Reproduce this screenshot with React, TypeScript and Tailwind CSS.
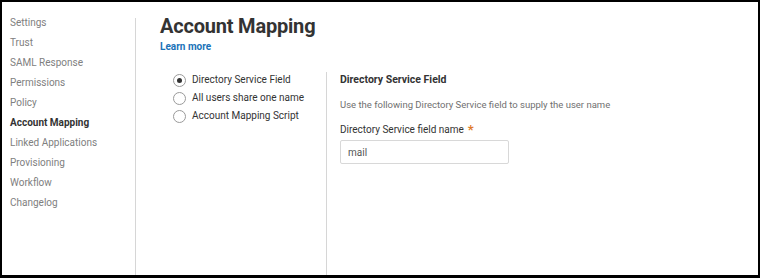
const NAV_ITEMS = [
  'Settings',
  'Trust',
  'SAML Response',
  'Permissions',
  'Policy',
  'Account Mapping',
  'Linked Applications',
  'Provisioning',
  'Workflow',
  'Changelog',
];

const MAPPING_OPTIONS = ['Directory Service Field', 'All users share one name', 'Account Mapping Script'];

function Radio({ checked }: { checked: boolean }) {
  return (
    <span className="w-[13px] h-[13px] rounded-full border border-[#9a9a9a] bg-white flex items-center justify-center shrink-0">
      {checked && <span className="w-[5px] h-[5px] rounded-full bg-[#333]" />}
    </span>
  );
}

export default function App() {
  const selected = 0;

  return (
    <div
      className="w-[760px] h-[278px] bg-black pl-[2px] pt-[2px] pr-[2px] pb-[3px]"
      style={{ fontFamily: 'Roboto, "Liberation Sans", sans-serif' }}
    >
      <div className="w-full h-full bg-white flex">
        {/* left nav */}
        <div className="w-[133px] pl-[8px] pt-[13px] shrink-0">
          {NAV_ITEMS.map((item) => (
            <div
              key={item}
              className={
                item === 'Account Mapping'
                  ? 'h-[20px] leading-[16px] text-[10px] font-bold text-[#333]'
                  : 'h-[20px] leading-[16px] text-[10px] text-[#808080]'
              }
            >
              {item}
            </div>
          ))}
        </div>
        <div className="w-px bg-[#d6d6d6] mt-[16px] shrink-0" />

        {/* main */}
        <div className="flex-1 pl-[24px] flex flex-col">
          <h1 className="text-[20px] leading-[24px] font-bold text-[#333] mt-[12px] tracking-[-0.2px]">Account Mapping</h1>
          <a className="text-[10px] leading-[14px] font-bold text-[#1a72b8] mt-[2px]">Learn more</a>

          <div className="flex flex-1 mt-[18px]">
            <div className="w-[166px] pl-[13px] pt-[1px] flex flex-col gap-[4px] shrink-0">
              {MAPPING_OPTIONS.map((opt, i) => (
                <div key={opt} className="flex items-center gap-[6px] h-[14px]">
                  <Radio checked={i === selected} />
                  <span className="text-[10px] text-[#333] leading-[14px]">{opt}</span>
                </div>
              ))}
            </div>
            <div className="w-px bg-[#d6d6d6] shrink-0" />
            <div className="pl-[13px] pt-[1px] flex flex-col">
              <div className="text-[10.5px] leading-[14px] font-bold text-[#333]">Directory Service Field</div>
              <div className="text-[9.5px] leading-[14px] text-[#707070] mt-[11px]">
                Use the following Directory Service field to supply the user name
              </div>
              <div className="text-[10px] leading-[14px] text-[#333] mt-[11px] flex items-center">
                Directory Service field name
                <span className="text-[#e07b2a] text-[13px] leading-[14px] ml-[4px] font-bold">*</span>
              </div>
              <div className="mt-[3px] w-[169px] h-[24px] border border-[#d8d8d8] rounded-[2px] flex items-center px-[7px] text-[10px] text-[#555]">
                mail
              </div>
            </div>
          </div>
        </div>
      </div>
    </div>
  );
}
